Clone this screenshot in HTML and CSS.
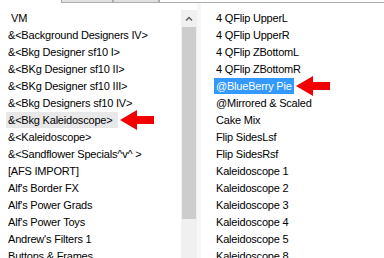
FILE: index.html
```html
<!DOCTYPE html>
<html lang="en">
<head>
  <meta charset="UTF-8">
  <title>Filters</title>
  <link rel="stylesheet" href="styles.css">
</head>
<body>
  <div class="tabs">
    <span class="tab tab-a"></span>
    <span class="tab tab-b"></span>
    <span class="tab tab-c"></span>
  </div>

  <div class="panes">
    <ul class="list list-left">
      <li class="item item-first">VM</li>
      <li class="item">&amp;&lt;Background Designers IV&gt;</li>
      <li class="item">&amp;&lt;Bkg Designer sf10 I&gt;</li>
      <li class="item">&amp;&lt;BKg Designer sf10 II&gt;</li>
      <li class="item">&amp;&lt;BKg Designer sf10 III&gt;</li>
      <li class="item">&amp;&lt;Bkg Designers sf10 IV&gt;</li>
      <li class="item"><span class="hl hl-grey">&amp;&lt;Bkg Kaleidoscope&gt;</span><svg class="arrow" viewBox="0 0 34 20" width="34" height="20"><polygon points="0,10 17,0 17,6 34,6 34,14 17,14 17,20" /></svg></li>
      <li class="item">&amp;&lt;Kaleidoscope&gt;</li>
      <li class="item">&amp;&lt;Sandflower Specials^v^ &gt;</li>
      <li class="item">[AFS IMPORT]</li>
      <li class="item">Alf's Border FX</li>
      <li class="item">Alf's Power Grads</li>
      <li class="item">Alf's Power Toys</li>
      <li class="item">Andrew's Filters 1</li>
      <li class="item">Buttons &amp; Frames</li>
    </ul>

    <div class="scrollbar">
      <div class="scroll-up">
        <svg viewBox="0 0 8 5" width="8" height="5"><polyline points="1,4.5 4,1.5 7,4.5" /></svg>
      </div>
      <div class="scroll-thumb"></div>
    </div>
    <div class="divider"></div>

    <ul class="list list-right">
      <li class="item">4 QFlip UpperL</li>
      <li class="item">4 QFlip UpperR</li>
      <li class="item">4 QFlip ZBottomL</li>
      <li class="item">4 QFlip ZBottomR</li>
      <li class="item"><span class="hl hl-blue">@BlueBerry Pie</span><svg class="arrow" viewBox="0 0 34 20" width="34" height="20"><polygon points="0,10 17,0 17,6 34,6 34,14 17,14 17,20" /></svg></li>
      <li class="item">@Mirrored &amp; Scaled</li>
      <li class="item">Cake Mix</li>
      <li class="item">Flip SidesLsf</li>
      <li class="item">Flip SidesRsf</li>
      <li class="item">Kaleidoscope 1</li>
      <li class="item">Kaleidoscope 2</li>
      <li class="item">Kaleidoscope 3</li>
      <li class="item">Kaleidoscope 4</li>
      <li class="item">Kaleidoscope 5</li>
      <li class="item">Kaleidoscope 8</li>
    </ul>
  </div>
</body>
</html>
```

FILE: styles.css
```css
body {
  margin: 0;
  width: 384px;
  height: 258px;
  overflow: hidden;
  background-color: #fff;
  font-family: "Liberation Sans", Arial, sans-serif;
  font-size: 11px;
  letter-spacing: -0.2px;
  color: #000;
}
.tabs {
  display: flex;
  height: 3px;
  padding-left: 61px;
}
.tab {
  height: 2px;
  border: 1px solid #adadad;
  border-top: none;
  background-color: #e1e1e1;
}
.tab-a {
  width: 50px;
}
.tab-b {
  width: 44px;
}
.tab-c {
  flex: 1;
  border-right: none;
  background-color: #fff;
}
.panes {
  display: flex;
  height: 255px;
}
.list {
  list-style: none;
  margin: 0;
  padding: 6px 0 0;
}
.list-left {
  width: 181px;
}
.list-right {
  flex: 1;
}
.item {
  display: flex;
  align-items: center;
  height: 17px;
  white-space: nowrap;
}
.list-left .item {
  padding-left: 8px;
}
.list-left .item-first {
  padding-left: 11px;
}
.list-right .item {
  padding-left: 15px;
}
.hl {
  padding: 0 2px;
  margin-left: -2px;
  line-height: 16px;
}
.hl-grey {
  padding-right: 6px;
  background-color: #e8e8e8;
}
.hl-blue {
  background-color: #3399ff;
  color: #fff;
}
.arrow {
  margin-left: 2px;
  fill: #f20000;
}
.scrollbar {
  width: 16px;
  margin-top: 7px;
  background-color: #f0f0f0;
}
.scroll-up {
  height: 17px;
  display: flex;
  align-items: center;
  justify-content: center;
}
.scroll-up polyline {
  fill: none;
  stroke: #606060;
  stroke-width: 1.5;
}
.scroll-thumb {
  height: 192px;
  margin: 0 1px;
  background-color: #cdcdcd;
}
.divider {
  width: 4px;
  background-color: #f7f7f7;
}
```
